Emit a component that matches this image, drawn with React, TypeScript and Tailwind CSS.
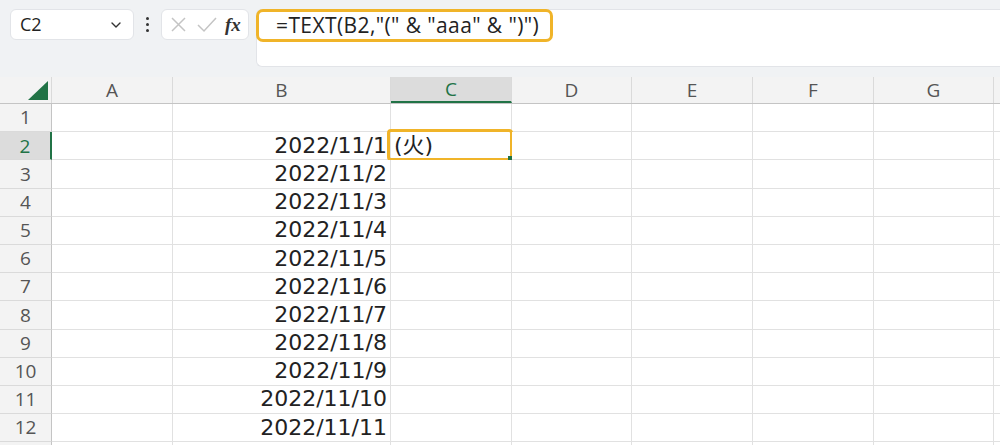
import React from 'react';

// Column layout (px) – matches the sheet widths in the screenshot
const columns = [
  { key: 'A', width: 121 },
  { key: 'B', width: 218 },
  { key: 'C', width: 121 },
  { key: 'D', width: 120 },
  { key: 'E', width: 121 },
  { key: 'F', width: 121 },
  { key: 'G', width: 120 },
  { key: '', width: 120 },
];

const dates: Record<number, string> = {};
for (let i = 2; i <= 12; i++) dates[i] = `2022/11/${i - 1}`;

const cellFont = { fontFamily: '"DejaVu Sans", "Noto Sans CJK JP", sans-serif' };

const Toolbar: React.FC = () => (
  <div className="flex h-[77px] items-start bg-[#f0f2f4] pt-[9px]">
    {/* Name box */}
    <div className="ml-[10px] flex h-[31px] w-[124px] items-center justify-between rounded-md border border-[#e2e4e8] bg-white pl-[9px] pr-[11px]">
      <span className="text-[18px] text-[#222]" style={{ fontFamily: '"Open Sans", sans-serif' }}>
        C2
      </span>
      <svg width="12" height="8" viewBox="0 0 12 8" fill="none">
        <path d="M2 2l4 4 4-4" stroke="#333" strokeWidth="1.4" strokeLinecap="round" strokeLinejoin="round" />
      </svg>
    </div>

    {/* Separator dots */}
    <div className="flex h-[31px] w-[27px] flex-col items-center justify-center gap-[3px]">
      <span className="h-[3px] w-[3px] rounded-full bg-[#333]" />
      <span className="h-[3px] w-[3px] rounded-full bg-[#333]" />
      <span className="h-[3px] w-[3px] rounded-full bg-[#333]" />
    </div>

    {/* Cancel / enter / fx */}
    <div className="flex h-[31px] w-[88px] items-center rounded-md border border-[#e2e4e8] bg-white pl-[8px]">
      <svg width="17" height="17" viewBox="0 0 17 17" fill="none">
        <path d="M2 2l13 13M15 2L2 15" stroke="#c4c4c4" strokeWidth="1.5" />
      </svg>
      <svg className="ml-[10px]" width="20" height="16" viewBox="0 0 20 16" fill="none">
        <path d="M1 8l6 6L19 1" stroke="#c4c4c4" strokeWidth="1.5" />
      </svg>
      <span
        className="ml-[8px] text-[19px] font-bold italic leading-none text-[#333]"
        style={{ fontFamily: '"Liberation Serif", serif' }}
      >
        fx
      </span>
    </div>

    {/* Formula bar */}
    <div className="ml-[7px] h-[58px] flex-1 rounded-l-md border border-r-0 border-[#e2e4e8] bg-white">
      <div className="-ml-px -mt-px flex h-[33px] w-[297px] items-center rounded-[7px] border-[3px] border-[#f0b429] pl-[17px]">
        <span
          className="text-[21px] leading-none tracking-[0.4px] text-[#222]"
          style={{ fontFamily: '"Open Sans", sans-serif' }}
        >
          =TEXT(B2,&quot;(&quot; &amp; &quot;aaa&quot; &amp; &quot;)&quot;)
        </span>
      </div>
    </div>
  </div>
);

const HeaderRow: React.FC = () => (
  <div className="flex h-[27px] border-b border-[#c4c4c4] bg-[#f3f3f3]">
    <div className="relative w-[52px] shrink-0 border-r border-[#dadada]">
      <svg className="absolute bottom-[3px] right-[3px]" width="20" height="19" viewBox="0 0 20 19">
        <path d="M20 0V19H0Z" fill="#217346" />
      </svg>
    </div>
    {columns.map((c, i) => {
      const active = c.key === 'C';
      return (
        <div
          key={i}
          style={{ width: c.width }}
          className={
            active
              ? 'flex shrink-0 items-center justify-center border-r border-b-2 border-r-[#dadada] border-b-[#217346] bg-[#dcdcdc] text-[19px] text-[#217346]'
              : 'flex shrink-0 items-center justify-center border-r border-[#dadada] text-[19px] text-[#555]'
          }
        >
          <span style={{ fontFamily: '"Open Sans", sans-serif' }}>{c.key}</span>
        </div>
      );
    })}
  </div>
);

const SheetRow: React.FC<{ row: number }> = ({ row }) => {
  const active = row === 2;
  return (
    <div className="flex h-[28.2px]">
      <div
        className={
          active
            ? 'flex w-[52px] shrink-0 items-center justify-center border-r-2 border-b border-r-[#217346] border-b-[#dadada] bg-[#dcdcdc] text-[19px] text-[#217346]'
            : 'flex w-[52px] shrink-0 items-center justify-center border-r border-b border-r-[#c4c4c4] border-b-[#dadada] bg-[#f3f3f3] text-[19px] text-[#555]'
        }
      >
        <span style={{ fontFamily: '"Open Sans", sans-serif' }}>{row}</span>
      </div>
      {columns.map((c, i) => {
        const selected = active && c.key === 'C';
        return (
          <div
            key={i}
            style={{ width: c.width, ...cellFont }}
            className="relative flex shrink-0 items-center border-r border-b border-[#e1e1e1] bg-white px-[2px] text-[22px] leading-none text-[#222]"
          >
            {c.key === 'B' && dates[row] && <span className="ml-auto pr-[1px]">{dates[row]}</span>}
            {selected && (
              <>
                <span className="pl-[1px]">(火)</span>
                <div className="absolute -bottom-[2px] -left-[4px] -right-[2px] -top-[3px] rounded-[4px] border-[3px] border-[#f0b429]" />
                <div className="absolute -bottom-[2px] -right-[2px] h-[5px] w-[5px] bg-[#217346]" />
              </>
            )}
          </div>
        );
      })}
    </div>
  );
};

export default function App() {
  return (
    <div className="h-[445px] w-[1000px] overflow-hidden bg-white">
      <Toolbar />
      <HeaderRow />
      {Array.from({ length: 12 }, (_, i) => (
        <SheetRow key={i} row={i + 1} />
      ))}
      {/* sliver of the next row */}
      <div className="flex h-[4px]">
        <div className="w-[52px] shrink-0 border-r border-[#c4c4c4] bg-[#f3f3f3]" />
        {columns.map((c, i) => (
          <div key={i} style={{ width: c.width }} className="shrink-0 border-r border-[#e1e1e1]" />
        ))}
      </div>
    </div>
  );
}
